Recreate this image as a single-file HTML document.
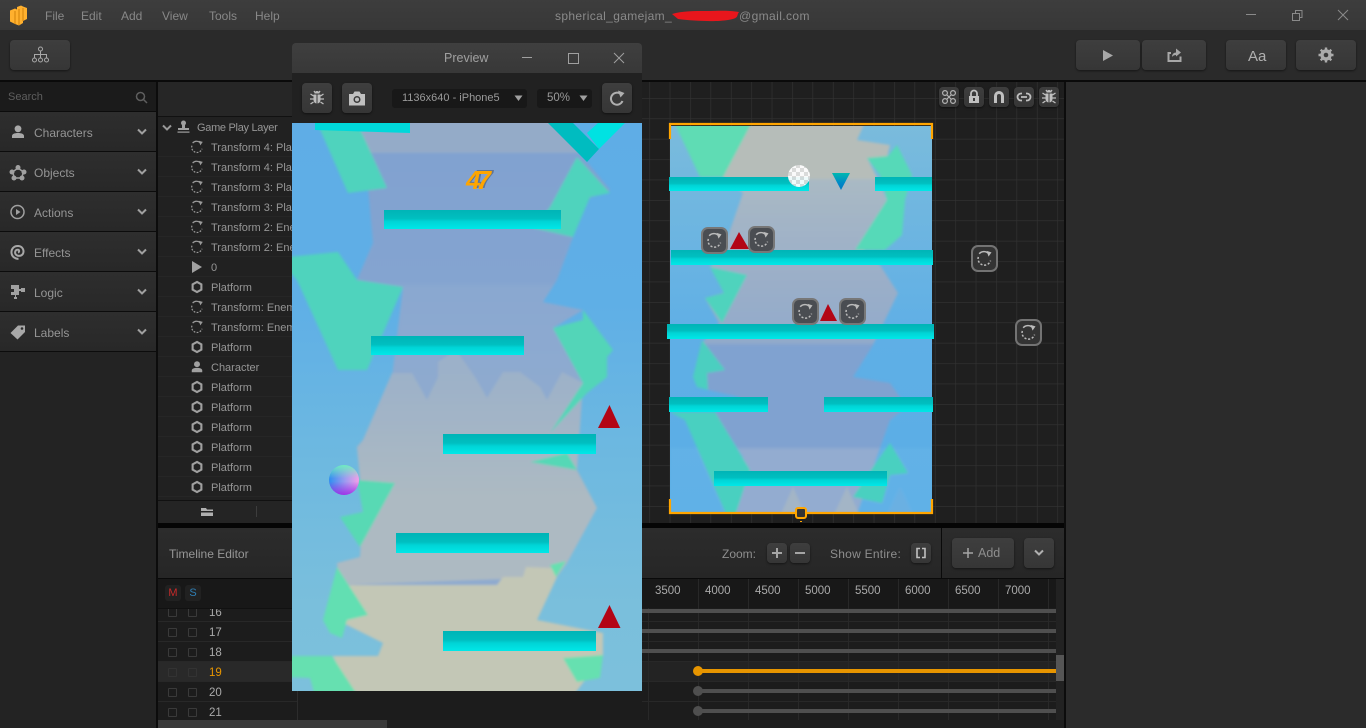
<!DOCTYPE html>
<html><head><meta charset="utf-8"><title>Editor</title>
<style>
html,body{margin:0;padding:0;width:1366px;height:728px;overflow:hidden;background:#222;font-family:"Liberation Sans",sans-serif;color:#999;font-size:12px}
.a{position:absolute}
.t{position:absolute;white-space:nowrap;line-height:14px}
.btn{position:absolute;background:linear-gradient(#3e3e3e,#363636);border-radius:4px;box-shadow:0 1px 2px rgba(0,0,0,.5)}
.cat{position:absolute;left:0;width:156px;height:39px;background:linear-gradient(#2e2e2e,#282828);border-bottom:1px solid #0c0c0c}
.cat span{position:absolute;left:34px;top:14px;font-size:12px;color:#959595;line-height:14px}
.row{position:absolute;left:158px;width:134px;height:19px;border-bottom:1px solid #262626;overflow:hidden}
.row span{position:absolute;left:53px;top:4px;font-size:11px;color:#969696;line-height:14px;white-space:nowrap}
.row svg{position:absolute;left:32px;top:3px}
.act{position:absolute;width:23px;height:23px;border:2px solid #777;border-radius:7px;background:#4a4d52}
.act.d{background:#333;border-color:#737373}
.act svg{position:absolute;left:3px;top:3px}
.cb{position:absolute;width:7px;height:7px;border:1px solid #3a3a3a;border-radius:1px}
.n{position:absolute;left:209px;font-size:11.5px;color:#aaa;line-height:14px}
.rl{position:absolute;top:584px;font-size:11.5px;color:#aaa;line-height:14px}
</style></head><body>
<svg width="0" height="0" style="position:absolute"><defs>
<symbol id="rot" viewBox="0 0 16 16"><path d="M3 3.500A6 6 0 0 1 11.500 3" fill="none" stroke="currentColor" stroke-width="1.400"/><path d="M2.200 6.500A6 6 0 0 0 13.700 10" fill="none" stroke="currentColor" stroke-width="1.400" stroke-dasharray="2 1.600"/><path d="M10 .8L14.600 2.200 11.800 6.200Z" fill="currentColor"/></symbol>
<symbol id="hex" viewBox="0 0 16 16"><path d="M8 2.200L13 5v6L8 13.800 3 11V5Z" fill="none" stroke="currentColor" stroke-width="2.400"/></symbol>
<symbol id="person" viewBox="0 0 16 16"><circle cx="8" cy="4.800" r="3.400" fill="currentColor"/><path d="M2 14v-2c0-2 2.500-3 6-3s6 1 6 3v2Z" fill="currentColor"/></symbol>
<symbol id="chev" viewBox="0 0 10 8"><path d="M1 1.500L5 5.500 9 1.500" fill="none" stroke="currentColor" stroke-width="2"/></symbol>
<symbol id="bug" viewBox="0 0 16 16"><path d="M5.500 3.500A2.500 2.500 0 0 1 10.500 3.500ZM4.500 4.500h3v9A3.500 3.500 0 0 1 4.500 10ZM8.500 4.500h3V10a3.500 3.500 0 0 1-3 3.500Z" fill="currentColor"/><path d="M1.500 4L4.500 6M1 9H4.500M1.500 14L4.500 12M14.500 4L11.500 6M15 9H11.500M14.500 14L11.500 12M5 1L6 2.500M11 1L10 2.500" stroke="currentColor" stroke-width="1.300"/></symbol>
<linearGradient id="plat" x1="0" y1="0" x2="0" y2="1"><stop offset="0" stop-color="#00b4b6"/><stop offset=".45" stop-color="#00bfc0"/><stop offset=".6" stop-color="#00d4d6"/><stop offset="1" stop-color="#00e8e8"/></linearGradient>
<linearGradient id="pbg" x1="0" y1="0" x2="0" y2="1"><stop offset="0" stop-color="#5fade6"/><stop offset=".32" stop-color="#5fafe6"/><stop offset=".6" stop-color="#6eb9e0"/><stop offset=".85" stop-color="#7abfdc"/><stop offset="1" stop-color="#7cc0dc"/></linearGradient>
<linearGradient id="pc" gradientUnits="userSpaceOnUse" x1="0" y1="123" x2="0" y2="691"><stop offset="0" stop-color="#94abc8"/><stop offset=".052" stop-color="#94abc8"/><stop offset=".053" stop-color="#81a2d0"/><stop offset=".28" stop-color="#84a4d0"/><stop offset=".29" stop-color="#8aa8d0"/><stop offset=".47" stop-color="#8eaacf"/><stop offset="1" stop-color="#8eaacf"/></linearGradient>
<linearGradient id="pg" gradientUnits="userSpaceOnUse" x1="0" y1="370" x2="0" y2="500"><stop offset="0" stop-color="#9cb1c9"/><stop offset="1" stop-color="#adbac2"/></linearGradient>
<linearGradient id="cbg" x1="0" y1="0" x2="0" y2="1"><stop offset="0" stop-color="#7abbdc"/><stop offset=".55" stop-color="#5fafe6"/><stop offset="1" stop-color="#5aaee6"/></linearGradient>
<linearGradient id="cc" gradientUnits="userSpaceOnUse" x1="0" y1="126" x2="0" y2="512"><stop offset="0" stop-color="#b6bdb9"/><stop offset=".135" stop-color="#b6bdb9"/><stop offset=".14" stop-color="#a9b9c4"/><stop offset=".35" stop-color="#9db0c8"/><stop offset=".56" stop-color="#92aaca"/><stop offset=".57" stop-color="#80a2d0"/><stop offset=".83" stop-color="#80a2d0"/><stop offset=".84" stop-color="#90a9cf"/><stop offset="1" stop-color="#90a9cf"/></linearGradient>
<linearGradient id="itri" x1="0" y1="0" x2="0" y2="1"><stop offset="0" stop-color="#00b8b0"/><stop offset=".6" stop-color="#0088c8"/><stop offset="1" stop-color="#0078c0"/></linearGradient>
<pattern id="chk" width="8" height="8" patternUnits="userSpaceOnUse"><rect width="8" height="8" fill="#fff"/><rect width="4" height="4" fill="#ddd"/><rect x="4" y="4" width="4" height="4" fill="#ddd"/></pattern>
<pattern id="grid" width="20.4" height="20.4" patternUnits="userSpaceOnUse" x="649.300" y="98"><path d="M0 0V20.400M0 0H20.400" stroke="#333" stroke-width="1.200" fill="none"/></pattern>
<filter id="bl" x="-5%" y="-5%" width="110%" height="110%"><feGaussianBlur stdDeviation="1.300"/></filter>
</defs></svg>

<!-- title bar -->
<div class="a" style="left:0;top:0;width:1366px;height:30px;background:linear-gradient(#3d3d3d,#373737)"></div>
<svg class="a" style="left:9px;top:5px" width="20" height="21" viewBox="0 0 20 21"><path d="M1 5.500l5-2 2 1V2l4-1.500 2 1 4 1.500v11l-4 2v2l-4 2.500-4-1.500-5-2.500Z" fill="#ffb02e"/><path d="M6 6v13M10 4v16M14 3v13" stroke="#d98a10" stroke-width="1.200" fill="none"/></svg>
<div class="t" style="left:45px;top:9px;color:#888">File</div>
<div class="t" style="left:81px;top:9px;color:#888">Edit</div>
<div class="t" style="left:121px;top:9px;color:#888">Add</div>
<div class="t" style="left:162px;top:9px;color:#888">View</div>
<div class="t" style="left:209px;top:9px;color:#888">Tools</div>
<div class="t" style="left:255px;top:9px;color:#888">Help</div>
<div class="t" style="left:555px;top:9px;color:#8a8a8a;letter-spacing:.35px">spherical_gamejam_</div>
<div class="t" style="left:739px;top:9px;color:#8a8a8a;letter-spacing:.4px">@gmail.com</div>
<svg class="a" style="left:670px;top:8px" width="72" height="15"><path d="M2 6C12 3 24 3 36 3S56 2 69 4C66 8 70 10 58 12S24 13 8 11Z" fill="#e8161c"/></svg>
<svg class="a" style="left:1240px;top:5px" width="126" height="20" fill="none" stroke="#8a8a8a" stroke-width="1"><path d="M6 9.500H16"/><path d="M52.500 8.500h7v7h-7ZM55.500 8V5.500h6.500V12.500h-2"/><path d="M98 5L108 15M108 5L98 15"/></svg>

<!-- toolbar -->
<div class="a" style="left:0;top:30px;width:1366px;height:50px;background:#2a2a2a"></div>
<div class="a" style="left:0;top:80px;width:1366px;height:2px;background:#0a0a0a"></div>
<div class="btn" style="left:10px;top:40px;width:60px;height:30px"></div>
<svg class="a" style="left:31px;top:46px" width="20" height="18" fill="none" stroke="#a8a8a8" stroke-width="1"><circle cx="9.500" cy="3" r="2"/><circle cx="3.500" cy="14" r="2"/><circle cx="9.500" cy="14" r="2"/><circle cx="15.500" cy="14" r="2"/><path d="M9.500 5V12M3.500 12V8.500H15.500V12"/></svg>
<div class="btn" style="left:1076px;top:40px;width:64px;height:30px"></div>
<div class="btn" style="left:1142px;top:40px;width:64px;height:30px"></div>
<div class="btn" style="left:1226px;top:40px;width:60px;height:30px"></div>
<div class="btn" style="left:1296px;top:40px;width:60px;height:30px"></div>
<svg class="a" style="left:1102px;top:49px" width="12" height="13"><path d="M1 1L11 6.500 1 12Z" fill="#a8a8a8"/></svg>
<svg class="a" style="left:1166px;top:47px" width="17" height="16"><path d="M5 6H2.500V14H14.500V9.500" fill="none" stroke="#a8a8a8" stroke-width="2"/><path d="M6 10C6 7 8 5.500 10 5.500V1.500L15 5.500 10 9.500V8C8.500 8 7 8.500 6 10Z" fill="#a8a8a8"/></svg>
<div class="t" style="left:1248px;top:48px;font-size:15px;line-height:17px;color:#b0b0b0">Aa</div>
<svg class="a" style="left:1318px;top:47px" width="16" height="16" viewBox="0 0 16 16"><circle cx="8" cy="8" r="4.200" fill="none" stroke="#ababab" stroke-width="3"/><path d="M8 .5V15.500M.5 8H15.500M2.700 2.700L13.300 13.300M13.300 2.700L2.700 13.300" stroke="#ababab" stroke-width="2.400"/><circle cx="8" cy="8" r="2.300" fill="#3a3a3a"/></svg>

<!-- left panel -->
<div class="a" style="left:0;top:82px;width:156px;height:646px;background:#232323"></div>
<div class="a" style="left:156px;top:82px;width:2px;height:646px;background:#0c0c0c"></div>
<div class="a" style="left:0;top:82px;width:156px;height:29px;background:#1b1b1b;border-bottom:1px solid #0c0c0c"></div>
<div class="t" style="left:8px;top:90px;color:#5e5e5e;font-size:11px">Search</div>
<svg class="a" style="left:135px;top:91px" width="13" height="13" fill="none" stroke="#5e5e5e" stroke-width="1.500"><circle cx="5.500" cy="5.500" r="4"/><path d="M8.500 8.500L12 12"/></svg>
<div class="cat" style="top:112px"><span>Characters</span></div>
<div class="cat" style="top:152px"><span>Objects</span></div>
<div class="cat" style="top:192px"><span>Actions</span></div>
<div class="cat" style="top:232px"><span>Effects</span></div>
<div class="cat" style="top:272px"><span>Logic</span></div>
<div class="cat" style="top:312px"><span>Labels</span></div>
<svg class="a" style="left:10px;top:124px;color:#a8a8a8" width="16" height="16"><use href="#person"/></svg>
<svg class="a" style="left:9px;top:164px" width="18" height="17" fill="#a0a0a0"><path d="M9 4L14.500 8 12.500 14H5.500L3.500 8Z" fill="none" stroke="#a0a0a0" stroke-width="1.500"/><circle cx="9" cy="3.500" r="2.500"/><circle cx="15" cy="8" r="2.500"/><circle cx="3" cy="8" r="2.500"/><circle cx="13" cy="14" r="2.500"/><circle cx="5" cy="14" r="2.500"/></svg>
<svg class="a" style="left:10px;top:204px" width="16" height="16"><circle cx="7.500" cy="8" r="6.500" fill="none" stroke="#a0a0a0" stroke-width="1.500"/><path d="M6 5L10.500 8 6 11Z" fill="#a0a0a0"/></svg>
<svg class="a" style="left:10px;top:244px" width="16" height="16" fill="none" stroke="#a8a8a8" stroke-width="2"><path d="M8 8.500C9.500 8 9.500 6 8 5.800 5.500 5.500 4.500 8 5.500 10 7 12.500 11 12.500 12.800 10 14.500 7 13 2.500 8.500 2 4 1.500 1 5 1.500 9 2 13 5.500 15 8.500 14.800"/></svg>
<svg class="a" style="left:10px;top:284px" width="16" height="16" fill="#a0a0a0"><path d="M1 1H9V5H11V4H15V8H11V7H9V11H6V13H7V15H4V13H5V11H1V8H4V5H1Z"/></svg>
<svg class="a" style="left:10px;top:324px" width="16" height="16"><path d="M8 1.500L15 1.500V8L7.500 15.500 .5 9Z" fill="#a8a8a8"/><circle cx="12" cy="4.500" r="1.300" fill="#2b2b2b"/></svg>
<svg class="a" style="left:137px;top:128px;color:#a0a0a0" width="10" height="8"><use href="#chev"/></svg>
<svg class="a" style="left:137px;top:168px;color:#a0a0a0" width="10" height="8"><use href="#chev"/></svg>
<svg class="a" style="left:137px;top:208px;color:#a0a0a0" width="10" height="8"><use href="#chev"/></svg>
<svg class="a" style="left:137px;top:248px;color:#a0a0a0" width="10" height="8"><use href="#chev"/></svg>
<svg class="a" style="left:137px;top:288px;color:#a0a0a0" width="10" height="8"><use href="#chev"/></svg>
<svg class="a" style="left:137px;top:328px;color:#a0a0a0" width="10" height="8"><use href="#chev"/></svg>

<!-- layer panel -->
<div class="a" style="left:158px;top:82px;width:134px;height:34px;background:#262626;border-bottom:1px solid #111"></div>
<div class="a" style="left:158px;top:117px;width:134px;height:383px;background:#212121"></div>
<svg class="a" style="left:162px;top:124px;color:#999" width="10" height="8"><use href="#chev"/></svg>
<svg class="a" style="left:176px;top:120px" width="15" height="14" fill="#a0a0a0"><circle cx="7.500" cy="3" r="2.500"/><rect x="6" y="4" width="3" height="5"/><rect x="2" y="8" width="11" height="2"/><rect x="1.500" y="11.500" width="12" height="1.200"/></svg>
<div class="t" style="left:197px;top:121px;font-size:11px;letter-spacing:-.3px;color:#969696">Game Play Layer</div>
<div class="row" style="top:137px"><svg width="14" height="14" style="color:#999"><use href="#rot"/></svg><span>Transform 4: Platform</span></div>
<div class="row" style="top:157px"><svg width="14" height="14" style="color:#999"><use href="#rot"/></svg><span>Transform 4: Platform</span></div>
<div class="row" style="top:177px"><svg width="14" height="14" style="color:#999"><use href="#rot"/></svg><span>Transform 3: Platform</span></div>
<div class="row" style="top:197px"><svg width="14" height="14" style="color:#999"><use href="#rot"/></svg><span>Transform 3: Platform</span></div>
<div class="row" style="top:217px"><svg width="14" height="14" style="color:#999"><use href="#rot"/></svg><span>Transform 2: Enemy</span></div>
<div class="row" style="top:237px"><svg width="14" height="14" style="color:#999"><use href="#rot"/></svg><span>Transform 2: Enemy</span></div>
<div class="row" style="top:257px"><svg width="14" height="14"><path d="M2 1L12 7 2 13Z" fill="#a0a0a0"/></svg><span>0</span></div>
<div class="row" style="top:277px"><svg width="14" height="14" style="color:#a0a0a0"><use href="#hex"/></svg><span>Platform</span></div>
<div class="row" style="top:297px"><svg width="14" height="14" style="color:#999"><use href="#rot"/></svg><span>Transform: Enemy</span></div>
<div class="row" style="top:317px"><svg width="14" height="14" style="color:#999"><use href="#rot"/></svg><span>Transform: Enemy</span></div>
<div class="row" style="top:337px"><svg width="14" height="14" style="color:#a0a0a0"><use href="#hex"/></svg><span>Platform</span></div>
<div class="row" style="top:357px"><svg width="14" height="14" style="color:#a0a0a0"><use href="#person"/></svg><span>Character</span></div>
<div class="row" style="top:377px"><svg width="14" height="14" style="color:#a0a0a0"><use href="#hex"/></svg><span>Platform</span></div>
<div class="row" style="top:397px"><svg width="14" height="14" style="color:#a0a0a0"><use href="#hex"/></svg><span>Platform</span></div>
<div class="row" style="top:417px"><svg width="14" height="14" style="color:#a0a0a0"><use href="#hex"/></svg><span>Platform</span></div>
<div class="row" style="top:437px"><svg width="14" height="14" style="color:#a0a0a0"><use href="#hex"/></svg><span>Platform</span></div>
<div class="row" style="top:457px"><svg width="14" height="14" style="color:#a0a0a0"><use href="#hex"/></svg><span>Platform</span></div>
<div class="row" style="top:477px"><svg width="14" height="14" style="color:#a0a0a0"><use href="#hex"/></svg><span>Platform</span></div>
<div class="a" style="left:158px;top:500px;width:134px;height:23px;background:#242424;border-top:1px solid #111;box-sizing:border-box"></div>
<svg class="a" style="left:200px;top:507px" width="14" height="10" fill="#b0b0b0"><path d="M1 1H6L7 2.500H13V4H1ZM1 5.500H13V9H1Z"/></svg>
<div class="a" style="left:256px;top:506px;width:1px;height:11px;background:#3d3d3d"></div>

<!-- canvas -->
<div class="a" style="left:292px;top:82px;width:772px;height:441px;background:#1f1f1f"></div>
<div class="a" style="left:1064px;top:82px;width:2px;height:646px;background:#0c0c0c"></div>
<div class="a" style="left:1066px;top:82px;width:300px;height:646px;background:#2b2b2b"></div>
<div class="a" style="left:158px;top:523px;width:906px;height:5px;background:#050505"></div>
<svg class="a" style="left:0;top:0" width="1366" height="728">
<rect x="642" y="82" width="422" height="441" fill="url(#grid)"/>
<clipPath id="cclip"><rect x="670" y="126" width="262" height="386"/></clipPath>
<rect x="670" y="126" width="262" height="386" fill="url(#cbg)"/>
<g filter="url(#bl)" clip-path="url(#cclip)">
<polygon fill="url(#cc)" points="753,120 866,120 857,140 890,145 887,157 867,158 877,177 887,200 863,250 880,265 898,293 873,345 853,377 890,383 907,407 890,420 880,448 855,520 727,520 743,457 715,413 740,397 708,390 707,373 725,370 703,342 719,323 705,298 723,293 747,275 710,267 723,250 743,193 723,177"/>
<rect x="670" y="448" width="262" height="64" fill="#fff" opacity=".035"/>
<polygon fill="#a3b5c6" points="780,516 793,487 806,516"/><polygon fill="#a3b5c6" points="833,516 847,487 860,516"/><polygon fill="#6ab0e2" points="887,516 900,488 913,516"/>
<polygon fill="#5fdcb4" points="673,120 753,120 723,177 700,177"/>
<polygon fill="#56d9b8" points="867,158 888,156 897,145 912,175 905,200 902,235 885,250 855,250 887,200 880,175"/>
<polygon fill="#4fd3bd" points="710,267 747,275 722,323 705,298 724,293"/>
<polygon fill="#4ccfc0" points="702,340 725,370 707,373 708,390 697,387 693,377"/>
<polygon fill="#48d0c0" points="670,412 715,412 750,470 735,516 727,516 685,420"/>
<polygon fill="#48d0c0" points="890,443 908,473 890,475 882,503 853,497 873,467"/>
</g>
<g fill="url(#plat)">
<rect x="669" y="177" width="140" height="14"/><rect x="875" y="177" width="57" height="14"/>
<rect x="671" y="250" width="262" height="15"/><rect x="667" y="324" width="267" height="15"/>
<rect x="669" y="397" width="99" height="15"/><rect x="824" y="397" width="109" height="15"/>
<rect x="714" y="471" width="173" height="15"/>
</g>
<circle cx="799" cy="176" r="11" fill="url(#chk)" opacity=".93"/>
<polygon points="832,173 850,173 841,190" fill="url(#itri)"/>
<polygon points="739,232 749,249 730,249" fill="#b30515"/>
<polygon points="828,304 837,321 820,321" fill="#b30515"/>
<g fill="none" stroke="#ffa500" stroke-width="2.200"><path d="M670 139V124H932V139"/><path d="M670 499V513H932V499"/></g>
<rect x="796" y="508" width="10" height="10" rx="2" fill="#333" stroke="#ffa500" stroke-width="2"/>
<rect x="800" y="521" width="2" height="1" fill="#ffa500"/>
</svg>
<div class="act" style="left:701px;top:227px;color:#bbb"><svg width="17" height="17"><use href="#rot"/></svg></div>
<div class="act" style="left:748px;top:226px;color:#bbb"><svg width="17" height="17"><use href="#rot"/></svg></div>
<div class="act" style="left:792px;top:298px;color:#bbb"><svg width="17" height="17"><use href="#rot"/></svg></div>
<div class="act" style="left:839px;top:298px;color:#bbb"><svg width="17" height="17"><use href="#rot"/></svg></div>
<div class="act d" style="left:971px;top:245px;color:#bbb"><svg width="17" height="17"><use href="#rot"/></svg></div>
<div class="act d" style="left:1015px;top:319px;color:#bbb"><svg width="17" height="17"><use href="#rot"/></svg></div>
<!-- canvas mini tools -->
<div class="btn" style="left:939px;top:87px;width:20px;height:20px"></div>
<div class="btn" style="left:964px;top:87px;width:20px;height:20px"></div>
<div class="btn" style="left:989px;top:87px;width:20px;height:20px"></div>
<div class="btn" style="left:1014px;top:87px;width:20px;height:20px"></div>
<div class="btn" style="left:1039px;top:87px;width:20px;height:20px"></div>
<svg class="a" style="left:941px;top:89px" width="16" height="16" fill="none" stroke="#b5b5b5" stroke-width="1.200"><circle cx="4" cy="4" r="2.400"/><circle cx="12" cy="4" r="2.400"/><circle cx="4" cy="12" r="2.400"/><circle cx="12" cy="12" r="2.400"/><path d="M6 6L10 10M10 6L6 10"/></svg>
<svg class="a" style="left:966px;top:89px" width="16" height="16"><path d="M5 7V4.500A3 3 0 0 1 11 4.500V7" fill="none" stroke="#c0c0c0" stroke-width="1.800"/><path d="M3 7H13V14H3Z" fill="#c0c0c0"/><rect x="7" y="9" width="2" height="3" fill="#3a3a3a"/></svg>
<svg class="a" style="left:991px;top:89px" width="16" height="16"><path d="M4.500 14V7A3.500 3.500 0 0 1 11.500 7V14" fill="none" stroke="#c0c0c0" stroke-width="3"/></svg>
<svg class="a" style="left:1016px;top:89px" width="16" height="16" fill="none" stroke="#c0c0c0" stroke-width="1.800"><path d="M6 4.500H5A3.500 3.500 0 0 0 5 11.500H6M10 4.500H11A3.500 3.500 0 0 1 11 11.500H10M5 8H11"/></svg>
<svg class="a" style="left:1041px;top:89px;color:#c0c0c0" width="16" height="16"><use href="#bug"/></svg>

<!-- timeline -->
<div class="a" style="left:158px;top:528px;width:906px;height:50px;background:linear-gradient(#2c2c2c,#262626)"></div>
<div class="a" style="left:158px;top:578px;width:906px;height:1px;background:#0a0a0a"></div>
<div class="t" style="left:169px;top:547px;font-size:12px;color:#969696">Timeline Editor</div>
<div class="t" style="left:722px;top:547px;color:#8e8e8e">Zoom:</div>
<div class="btn" style="left:767px;top:543px;width:20px;height:20px"></div>
<div class="btn" style="left:790px;top:543px;width:20px;height:20px"></div>
<svg class="a" style="left:767px;top:543px" width="44" height="20"><path d="M5 10H15M10 5V15M28 10H38" stroke="#a5a5a5" stroke-width="2"/></svg>
<div class="t" style="left:830px;top:547px;color:#8e8e8e;letter-spacing:.25px">Show Entire:</div>
<div class="btn" style="left:911px;top:543px;width:20px;height:20px"></div>
<svg class="a" style="left:911px;top:543px" width="20" height="20" fill="none" stroke="#c0c0c0" stroke-width="1.600"><path d="M9 5.500H6V14.500H9M11 5.500H14V14.500H11"/></svg>
<div class="a" style="left:941px;top:528px;width:1px;height:50px;background:#0a0a0a"></div>
<div class="btn" style="left:952px;top:538px;width:62px;height:30px"></div>
<svg class="a" style="left:962px;top:547px" width="12" height="12"><path d="M1 6H11M6 1V11" stroke="#a5a5a5" stroke-width="1.500"/></svg>
<div class="t" style="left:978px;top:546px;font-size:12.500px;color:#8e8e8e">Add</div>
<div class="btn" style="left:1024px;top:538px;width:30px;height:30px"></div>
<svg class="a" style="left:1034px;top:549px;color:#b0b0b0" width="10" height="8"><use href="#chev"/></svg>
<div class="a" style="left:158px;top:579px;width:906px;height:141px;background:#1c1c1c"></div>
<div class="a" style="left:642px;top:579px;width:414px;height:29px;background:#181818"></div>
<div class="a" style="left:158px;top:661px;width:139px;height:20px;background:#292929"></div>
<div class="a" style="left:642px;top:661px;width:414px;height:20px;background:#232323"></div>
<svg class="a" style="left:0;top:0" width="1366" height="728">
<g stroke="#282828" stroke-width="1"><path d="M158 621.500H297M158 641.500H297M158 661.500H297M158 681.500H297M158 701.500H297"/><path d="M642 621.500H1056M642 641.500H1056M642 661.500H1056M642 681.500H1056M642 701.500H1056"/>
<path d="M648.500 608V720M698.500 579V720M748.500 579V720M798.500 579V720M848.500 579V720M898.500 579V720M948.500 579V720M998.500 579V720M1048.500 579V720"/><path d="M297.500 608V720" stroke="#2c2c2c"/></g>
<g fill="#4f4f4f"><rect x="642" y="609" width="414" height="4"/><rect x="642" y="629" width="414" height="4"/><rect x="642" y="649" width="414" height="4"/><rect x="698" y="689" width="358" height="4"/><rect x="698" y="709" width="358" height="4"/><circle cx="698" cy="691" r="5"/><circle cx="698" cy="711" r="5"/></g>
<rect x="698" y="669" width="358" height="4" fill="#e79500"/><circle cx="698" cy="671" r="5" fill="#e79500"/>
</svg>
<div class="cb" style="left:168px;top:608px"></div><div class="cb" style="left:188px;top:608px"></div>
<div class="cb" style="left:168px;top:628px"></div><div class="cb" style="left:188px;top:628px"></div>
<div class="cb" style="left:168px;top:648px"></div><div class="cb" style="left:188px;top:648px"></div>
<div class="cb" style="left:168px;top:668px;border-color:#333"></div><div class="cb" style="left:188px;top:668px;border-color:#333"></div>
<div class="cb" style="left:168px;top:688px"></div><div class="cb" style="left:188px;top:688px"></div>
<div class="cb" style="left:168px;top:708px"></div><div class="cb" style="left:188px;top:708px"></div>
<div class="n" style="top:606px">16</div><div class="n" style="top:626px">17</div><div class="n" style="top:646px">18</div><div class="n" style="top:666px;color:#e79500">19</div><div class="n" style="top:686px">20</div><div class="n" style="top:706px">21</div>
<div class="a" style="left:158px;top:579px;width:139px;height:29px;background:#181818"></div>
<div class="a" style="left:165px;top:585px;width:16px;height:16px;background:#212121;border-radius:3px;text-align:center;line-height:16px;color:#c92a2a;font-size:11px">M</div>
<div class="a" style="left:185px;top:585px;width:16px;height:16px;background:#212121;border-radius:3px;text-align:center;line-height:16px;color:#2f7fb5;font-size:11px">S</div>
<div class="a" style="left:158px;top:608px;width:139px;height:1px;background:#111"></div>
<div class="rl" style="left:655px">3500</div><div class="rl" style="left:705px">4000</div><div class="rl" style="left:755px">4500</div><div class="rl" style="left:805px">5000</div><div class="rl" style="left:855px">5500</div><div class="rl" style="left:905px">6000</div><div class="rl" style="left:955px">6500</div><div class="rl" style="left:1005px">7000</div>
<div class="a" style="left:1056px;top:579px;width:8px;height:141px;background:#222"></div>
<div class="a" style="left:1056px;top:655px;width:8px;height:26px;background:#555"></div>
<div class="a" style="left:158px;top:720px;width:906px;height:8px;background:#202020"></div>
<div class="a" style="left:158px;top:720px;width:229px;height:8px;background:#3a3a3a"></div>

<!-- preview window -->
<div class="a" style="left:292px;top:43px;width:350px;height:30px;background:linear-gradient(#3f3f3f,#383838);border-radius:4px 4px 0 0"></div>
<div class="a" style="left:292px;top:73px;width:350px;height:50px;background:#212121"></div>
<div class="t" style="left:444px;top:51px;font-size:12.500px;color:#a0a0a0">Preview</div>
<svg class="a" style="left:520px;top:50px" width="112" height="16" fill="none" stroke="#a0a0a0" stroke-width="1"><path d="M2 7.500H12"/><path d="M48.500 3.500H58.500V13.500H48.500Z"/><path d="M94 3L104 13M104 3L94 13"/></svg>
<div class="btn" style="left:302px;top:83px;width:30px;height:30px"></div>
<div class="btn" style="left:342px;top:83px;width:30px;height:30px"></div>
<div class="btn" style="left:602px;top:83px;width:30px;height:30px"></div>
<svg class="a" style="left:309px;top:90px;color:#bdbdbd" width="16" height="16"><use href="#bug"/></svg>
<svg class="a" style="left:348px;top:91px" width="18" height="15"><path d="M1 3H5L6.500 .5H11.500L13 3H17V14.500H1Z" fill="#c0c0c0"/><circle cx="9" cy="8.500" r="3.500" fill="#3a3a3a"/><circle cx="9" cy="8.500" r="2" fill="#c0c0c0"/></svg>
<svg class="a" style="left:609px;top:90px" width="16" height="16" fill="none" stroke="#b0b0b0" stroke-width="2"><path d="M13.500 11A6 6 0 1 1 11 3.500"/><path d="M9 .5L15.500 3 11.500 7.500Z" fill="#b0b0b0" stroke="none"/></svg>
<div class="a" style="left:392px;top:89px;width:135px;height:19px;background:#181818;border-radius:3px"></div>
<div class="t" style="left:402px;top:91px;font-size:11px;color:#9a9a9a">1136x640 - iPhone5</div>
<svg class="a" style="left:514px;top:95px" width="9" height="7"><path d="M.5 .5H8.500L4.500 6Z" fill="#a0a0a0"/></svg>
<div class="a" style="left:537px;top:89px;width:55px;height:19px;background:#181818;border-radius:3px"></div>
<div class="t" style="left:547px;top:91px;font-size:11.500px;color:#9a9a9a">50%</div>
<svg class="a" style="left:579px;top:95px" width="9" height="7"><path d="M.5 .5H8.500L4.500 6Z" fill="#a0a0a0"/></svg>

<svg class="a" style="left:292px;top:123px" width="350" height="568" viewBox="292 123 350 568">
<rect x="292" y="123" width="350" height="568" fill="url(#pbg)"/>
<g filter="url(#bl)">
<polygon fill="url(#pc)" points="345,118 557,118 587,162 610,190 567,207 573,237 557,280 543,302 583,310 553,328 583,383 577,470 597,508 567,563 557,577 537,620 603,633 603,656 573,696 353,696 333,656 378,656 383,643 343,623 337,563 360,557 363,512 357,447 363,440 392,377 403,287 357,280 373,243 365,153"/>
<polygon fill="url(#pg)" points="392,373 412,373 427,400 438,377 438,362 456,350 475,377 487,398 503,372 520,372 540,387 547,400 562,372 583,383 577,470 597,508 567,563 557,577 340,585 337,563 360,557 363,512 357,447 363,440"/>
<polygon fill="#c3c7b6" points="343,585 497,585 503,577 523,577 526,567 553,568 557,577 537,620 603,633 603,656 573,696 353,696 333,656 378,656 383,643 343,623"/>
<polygon fill="#4fd3bd" points="315,118 355,118 387,188 348,193"/>
<polygon fill="#4fd3bd" points="577,157 610,193 590,197 573,237 533,228 550,207"/>
<polygon fill="#4fd3bd" points="288,257 338,252 357,280 403,287 367,370 338,370 297,280 288,270"/>
<polygon fill="#52d5b8" points="583,310 613,350 607,357 607,377 587,393 550,433 583,383 553,328 583,320"/>
<polygon fill="#55d8b6" points="530,462 567,453 577,470"/>
<polygon fill="#58d9b4" points="357,480 395,483 360,547 340,517 363,512"/>
<polygon fill="#62dfb2" points="337,567 368,615 347,620 342,638 330,633 323,620"/>
<polygon fill="#66e0b0" points="288,656 332,656 358,696 315,696 310,678 288,677"/>
<polygon fill="#66e0b0" points="563,658 603,655 600,678 577,682"/>
<polygon fill="#66e0b0" points="550,565 566,561 556,577"/>
</g>
<polygon points="315,123 410,123 410,133 315,130" fill="#00d8da"/>
<polygon points="598,123 625,123 599,149 587,133" fill="#00e2e2"/>
<polygon points="548,123 573,123 599,149 587,162" fill="#00bcc0"/>
<g fill="url(#plat)"><rect x="384" y="210" width="177" height="19"/><rect x="371" y="336" width="153" height="19"/><rect x="443" y="434" width="153" height="20"/><rect x="396" y="533" width="153" height="20"/><rect x="443" y="631" width="153" height="20"/></g>
<polygon points="609.500,405 620,428 598,428" fill="#b30515"/>
<polygon points="609.500,605 620.500,628 598,628" fill="#b30515"/>
<text x="466" y="189" font-family="Liberation Sans" font-weight="700" font-style="italic" font-size="26" letter-spacing="-4" fill="#5f7596" transform="translate(2,-1)">47</text>
<text x="466" y="189" font-family="Liberation Sans" font-weight="700" font-style="italic" font-size="26" letter-spacing="-4" fill="#ffa500">47</text>
</svg>
<div class="a" style="left:329px;top:465px;width:30px;height:30px;border-radius:50%;background:linear-gradient(180deg,rgba(110,240,190,.95) 0,rgba(110,240,190,0) 45%),linear-gradient(0deg,rgba(160,40,230,.9) 0,rgba(160,40,230,0) 45%),linear-gradient(90deg,#2f8ff0,#9f9cf0 55%,#f49ee8)"></div>
</body></html>
